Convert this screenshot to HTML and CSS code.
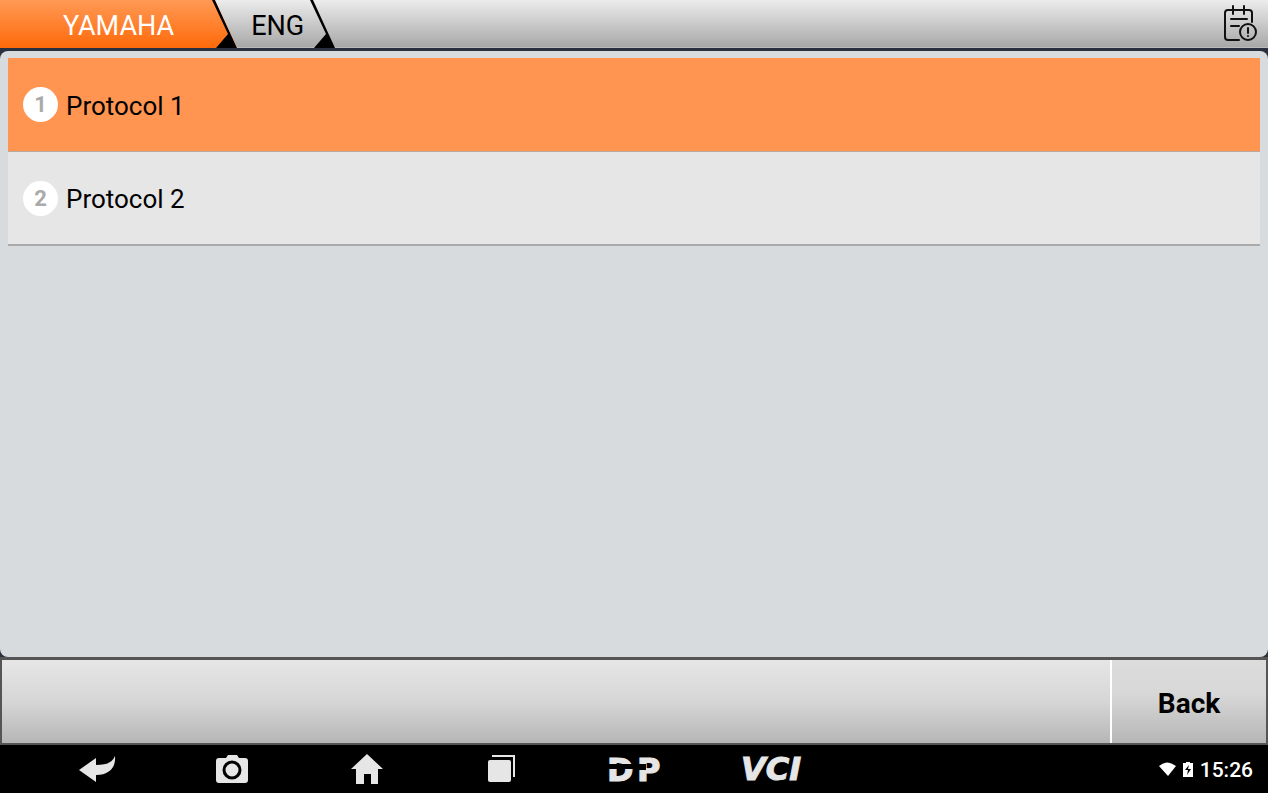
FILE: index.html
```
<!DOCTYPE html>
<html lang="en" dir="ltr">
<head>
  <title>YAMAHA: Protocol</title>
  <meta charset="UTF-8">
  <meta name="viewport" content="width=device-width, initial-scale=1">
  <link rel="stylesheet" href="styles.css">
</head>
<body>
  <header class="topbar">
    <nav class="tabs" aria-label="Path">
      <a href="#yamaha" class="tab tab--active">
        <span>YAMAHA</span>
        <svg class="tab-edge" viewBox="0 0 25 48" aria-hidden="true"><path d="M0 0h3l22 48H4l12-14z"/></svg>
      </a>
      <a href="#eng" class="tab">
        <span>ENG</span>
        <svg class="tab-edge" viewBox="0 0 25 48" aria-hidden="true"><path d="M0 0h3l22 48H4l12-14z"/></svg>
      </a>
    </nav>
    <button class="report" type="button" aria-label="Report">
      <svg class="icon-report" viewBox="0 0 34 38" fill="none" stroke="#111" stroke-width="2" stroke-linecap="round">
        <path d="M7 6H5q-3 0-3 3v24q0 3 3 3h11M7 6h19q3 0 3 3v9M10 2v8M21 2v8M8 15h16M8 22h8"/>
        <circle cx="25" cy="28" r="8"/>
        <path d="M25 24v5M25 32v0"/>
      </svg>
    </button>
  </header>

  <main class="content">
    <ol class="list">
      <li><button class="item item--active" type="button"><span class="number">1</span><span class="label">Protocol 1</span></button></li>
      <li><button class="item" type="button"><span class="number">2</span><span class="label">Protocol 2</span></button></li>
    </ol>
  </main>

  <div class="actions">
    <button class="back" type="button">Back</button>
  </div>

  <footer class="system">
    <nav class="keys" aria-label="System">
      <button class="key" type="button" aria-label="Return">
        <svg width="38" height="30" viewBox="0 0 38 30"><path d="M1 16 18 4v7c10 0 16-2 19-9 1 12-6 19-19 19v7z"/></svg>
      </button>
      <button class="key" type="button" aria-label="Screenshot">
        <svg width="32" height="28" viewBox="0 0 32 28"><path d="M3 3h7l2-3h9l2 3h6q3 0 3 3v19q0 3-3 3H3q-3 0-3-3V6q0-3 3-3z"/><circle class="lens" cx="16" cy="15" r="8"/></svg>
      </button>
      <button class="key" type="button" aria-label="Home">
        <svg width="32" height="30" viewBox="0 0 32 30"><path d="M16 0 32 15h-5v15h-7V20h-7v10H5V15H0z"/></svg>
      </button>
      <button class="key" type="button" aria-label="Recent apps">
        <svg width="28" height="28" viewBox="0 0 28 28"><path d="M4 0h23v22h-2V2H4z"/><rect y="5" width="23" height="22" rx="2"/></svg>
      </button>
      <button class="key" type="button" aria-label="DP">
        <svg width="64" height="48" viewBox="0 0 64 48"><text class="mark" x="2" y="36">D</text><text class="mark" x="32" y="36">P</text><path class="cut" d="M0 19h30l-2 5H0zM32 19h9v6h-9z"/></svg>
      </button>
      <button class="key" type="button" aria-label="VCI">
        <svg width="68" height="48" viewBox="0 0 68 48"><text class="mark mark--slanted" x="3" y="35">VCI</text></svg>
      </button>
    </nav>
    <div class="status">
      <svg width="17" height="14" viewBox="0 0 17 14" aria-label="Wi-Fi"><path d="M0 4q8-7 17 0L9 14z"/></svg>
      <svg width="10" height="15" viewBox="0 0 10 15" aria-label="Charging"><path d="M0 1h3V0h4v1h3v14H0z"/><path class="bolt" d="M6 3 2 8h3l-1 5 4-6H5z"/></svg>
      <time>15:26</time>
    </div>
  </footer>
</body>
</html>
```
FILE: styles.css
```
* {
  box-sizing: border-box;
}
body {
  background-color: #2b303e;
  color: #000;
  display: flex;
  flex-direction: column;
  font-family: Roboto, sans-serif;
  margin: 0;
  min-height: 100vh;
}
button {
  background: none;
  border: 0;
  color: inherit;
  font: inherit;
  padding: 0;
}
svg {
  display: block;
}

/* TOP BAR */
.topbar {
  background: linear-gradient(#ececec, #a8a8a8);
  border-bottom: 1px solid #bbb;
  display: flex;
  height: 48px;
  justify-content: space-between;
  margin-bottom: 3px;
}
.tabs {
  display: flex;
}
.tab {
  align-items: center;
  color: #000;
  display: flex;
  font-size: 27px;
  gap: 6px;
  height: 48px;
  padding-left: 14px;
  text-decoration: none;
}
.tab span {
  padding-top: 4px;
}
.tab--active {
  background: linear-gradient(#ff9955, #ff6a0a);
  clip-path: polygon(0 0, calc(100% - 22px) 0, 100% 100%, 0 100%);
  color: #FFF;
  gap: 38px;
  padding-left: 63px;
}
.tab-edge {
  height: 48px;
  width: 25px;
}
.report {
  padding: 0 11px 2px 0;
}
.icon-report {
  height: 38px;
  width: 34px;
}

/* CONTENT */
.content {
  background-color: #d7dbde;
  border-radius: 8px;
  flex: 1;
  padding: 7px 8px;
}
.list {
  list-style: none;
  margin: 0;
  padding: 0;
}
.item {
  align-items: center;
  background-color: #e6e6e6;
  border-bottom: 2px solid #aaa;
  display: flex;
  font-size: 26px;
  gap: 8px;
  height: 94px;
  padding: 0 15px;
  width: 100%;
}
.item--active {
  background-color: #ff9550;
  border-bottom: 1px solid #bbaaa0;
}
.label {
  padding-top: 2px;
}
.number {
  align-items: center;
  background-color: #FFF;
  border-radius: 50%;
  color: #aaa;
  display: flex;
  font-size: 22px;
  font-weight: 700;
  height: 35px;
  justify-content: center;
  width: 35px;
}

/* ACTIONS */
.actions {
  background: linear-gradient(#e6e6e6, #d6d6d6 50%, #b6b6b6);
  border: 2px solid #555;
  border-top-width: 3px;
  display: flex;
  height: 88px;
  justify-content: flex-end;
}
.back {
  background: linear-gradient(#dcdcdc, #d8d8d8 40%, #b6b6b6);
  border-left: 2px solid #FFF;
  font-size: 28px;
  font-weight: 700;
  padding-top: 4px;
  width: 156px;
}

/* SYSTEM BAR */
.system {
  align-items: center;
  background-color: #000;
  color: #FFF;
  display: flex;
  height: 48px;
  justify-content: space-between;
  padding: 0 15px 0 29px;
}
.keys {
  display: flex;
}
.key {
  align-items: center;
  display: flex;
  fill: #e6e6e6;
  height: 48px;
  justify-content: center;
  width: 135px;
}
.lens {
  stroke: #000;
  stroke-width: 3;
}
.mark {
  font-family: "DejaVu Sans", sans-serif;
  font-size: 32px;
  font-weight: 700;
  stroke: #e6e6e6;
  stroke-width: 1px;
}
.mark--slanted {
  font-style: italic;
}
.cut {
  fill: #000;
}
.status {
  align-items: center;
  display: flex;
  fill: #FFF;
  font-size: 21px;
  font-weight: 500;
  gap: 7px;
}
.status time {
  padding-top: 2px;
}
.bolt {
  fill: #000;
}
```
